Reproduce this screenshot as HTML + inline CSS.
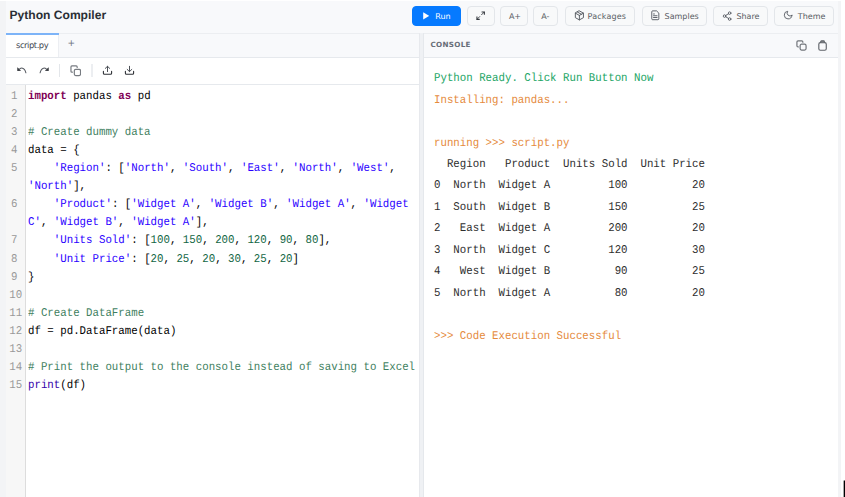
<!DOCTYPE html>
<html>
<head>
<meta charset="utf-8">
<title>Python Compiler</title>
<style>
html,body{margin:0;padding:0;background:#fff;}
body{text-rendering:geometricPrecision;width:845px;height:497px;overflow:hidden;position:relative;font-family:"DejaVu Sans","Liberation Sans",sans-serif;}
#frame{position:absolute;left:0;top:1px;width:841px;height:496px;background:#f3f4f6;}
#app{position:absolute;left:6px;top:0;width:832px;height:496px;background:#fff;}
#hdr{position:absolute;left:0;top:0;width:832px;height:32px;background:#f8f9fb;box-sizing:border-box;}
#title{position:absolute;left:3.5px;top:6.4px;font:bold 12.08px/16px "Liberation Sans",sans-serif;color:#2a2f35;white-space:nowrap;}
.btn{position:absolute;top:5px;height:20px;box-sizing:border-box;border:1px solid #e3e6ea;border-radius:4px;background:#f8f9fa;color:#4a4f57;font-size:8.1px;line-height:18px;white-space:nowrap;}
.bt{position:absolute;top:7.4px;font-size:8px;line-height:18px;color:#585d64;white-space:nowrap;}
.hi{position:absolute;}
#runt{color:#fff;}
#run{background:#067aff;border-color:#067aff;}
#left{position:absolute;left:0;top:32px;width:413px;height:464px;background:#fff;}
#split{position:absolute;left:413px;top:32px;width:5px;height:464px;background:#eff1f4;border-left:1px solid #e7e9ed;border-right:1px solid #e5e8ec;box-sizing:border-box;}
#right{position:absolute;left:418px;top:32px;width:414px;height:464px;background:#fff;}
#tabs{position:absolute;left:0;top:0;width:413px;height:25px;background:#f8f9fb;border-bottom:1px solid #e6e9ed;box-sizing:border-box;box-shadow:inset 0 1px 0 #eceef1;}
#tab{position:absolute;left:0;top:0;width:53px;height:24px;background:#fff;box-sizing:border-box;border-right:1px solid #eceef2;}
#tab i{position:absolute;left:0;top:0;width:53px;height:2px;background:#7db4f8;}
#tab span{position:absolute;left:10px;top:5px;font-size:8.4px;line-height:14px;color:#42474f;letter-spacing:-0.45px;white-space:nowrap;}
#plus{position:absolute;left:61.6px;top:4.4px;font-size:9px;line-height:14px;color:#6b7280;}
#tools{position:absolute;left:0;top:25px;width:413px;height:27px;background:#fff;border-bottom:1px solid #e6e9ed;box-sizing:border-box;}
#tools svg{position:absolute;}
.sep{position:absolute;top:6px;width:1px;height:13px;background:#e3e6ea;}
#ed{position:absolute;left:0;top:52px;width:413px;height:412px;background:#fff;font:10.75px/18.06px "Liberation Mono",monospace;color:#000;}
#gut{position:absolute;left:0;top:0;width:20px;height:412px;background:#f7f7f7;border-right:1px solid #ddd;box-sizing:border-box;}
.ln{transform:scaleY(1.1);transform-origin:0 11.9px;position:absolute;color:#999;height:18.06px;white-space:pre;}
.cl{transform:scaleY(1.1);transform-origin:0 11.9px;position:absolute;left:22px;white-space:pre;height:18.06px;}
.k{color:#7f0055;font-weight:bold;}
.c{color:#3f7f5f;}
.s{color:#2a00ff;}
.n{color:#116644;}
.b{color:#3300aa;}
#chdr{position:absolute;left:0;top:0;width:414px;height:25px;background:#f8f9fb;border-bottom:1px solid #e6e9ed;box-sizing:border-box;box-shadow:inset 0 1px 0 #eceef1;}
#chdr span{position:absolute;left:6.5px;top:4.5px;font:bold 7.2px/14px "DejaVu Sans",sans-serif;color:#676d77;letter-spacing:0.3px;}
#chdr svg{position:absolute;}
#con{position:absolute;left:0;top:25px;width:414px;height:439px;font:10.75px/21.45px "Liberation Mono",monospace;color:#2e2e2e;}
.o{transform:scaleY(1.1);transform-origin:0 13.6px;position:absolute;left:10px;white-space:pre;height:21.45px;}
.g{color:#22a565;}
.y{color:#e58a3c;}
#blk{position:absolute;left:844px;top:481px;width:1px;height:16px;background:#000;box-shadow:-1px 0 0 #a6a6a6;}
#blk2{position:absolute;left:843px;top:480px;width:2px;height:1px;background:linear-gradient(90deg,#d6d6d6 50%,#7c7c7c 50%);}
</style>
</head>
<body>
<div id="frame">
<div id="app">
  <div id="hdr">
    <div id="title">Python Compiler</div>
    <div class="btn" id="run" style="left:406.2px;width:48.6px;"></div>
    <svg class="hi" style="left:417.1px;top:10.8px" width="6.4" height="7.8" viewBox="0 0 7 8"><path d="M0.2 0.1 L6.8 4 L0.2 7.9 Z" fill="#fff"/></svg>
    <span class="bt" id="runt" style="left:429.3px;">Run</span>
    <div class="btn" style="left:460.5px;width:28.2px;"></div>
    <svg class="hi" style="left:470.1px;top:9.6px" width="9.3" height="9.3" viewBox="0 0 10 10" fill="none" stroke="#33373d" stroke-linejoin="miter"><path d="M6 1H9V4M1 6V9H4" stroke-width="1.15"/><path d="M9 1L5.7 4.3M1 9L4.3 5.7" stroke-width="0.95"/></svg>
    <div class="btn" style="left:494.3px;width:27.9px;"></div>
    <span class="bt" style="left:502.9px;">A+</span>
    <div class="btn" style="left:526.6px;width:25.7px;"></div>
    <span class="bt" style="left:535.2px;">A-</span>
    <div class="btn" style="left:559.4px;width:69.2px;"></div>
    <svg class="hi" style="left:567.6px;top:9.1px" width="10.8" height="10.8" viewBox="0 0 24 24" fill="none" stroke="#555a62" stroke-width="2.1" stroke-linecap="round" stroke-linejoin="round"><path d="M12 2L21 7V17L12 22L3 17V7Z"/><path d="M3 7L12 12L21 7M12 12V22M7.5 4.5L16.5 9.5"/></svg>
    <span class="bt" style="left:581.6px;letter-spacing:0.14px">Packages</span>
    <div class="btn" style="left:635.5px;width:65.2px;"></div>
    <svg class="hi" style="left:643.8px;top:9.4px" width="10.6" height="10.6" viewBox="0 0 24 24" fill="none" stroke="#555a62" stroke-width="2.1" stroke-linecap="round" stroke-linejoin="round"><path d="M14 2H6a2 2 0 0 0-2 2v16a2 2 0 0 0 2 2h12a2 2 0 0 0 2-2V8Z"/><path d="M8 13h8M8 17h8M8 9h2"/></svg>
    <span class="bt" style="left:658.6px;">Samples</span>
    <div class="btn" style="left:707.1px;width:55.4px;"></div>
    <svg class="hi" style="left:715.8px;top:9.5px" width="10.2" height="10.2" viewBox="0 0 24 24" fill="none" stroke="#555a62" stroke-width="2.1" stroke-linecap="round" stroke-linejoin="round"><circle cx="18" cy="5" r="3"/><circle cx="6" cy="12" r="3"/><circle cx="18" cy="19" r="3"/><path d="M8.6 13.5l6.8 4M15.4 6.5l-6.8 4"/></svg>
    <span class="bt" style="left:730.4px;">Share</span>
    <div class="btn" style="left:768.3px;width:60.0px;"></div>
    <svg class="hi" style="left:777.2px;top:9.4px" width="10.2" height="10.2" viewBox="0 0 24 24" fill="none" stroke="#555a62" stroke-width="2.1" stroke-linecap="round" stroke-linejoin="round"><path d="M21 12.8A9 9 0 1 1 11.2 3 7 7 0 0 0 21 12.8z"/></svg>
    <span class="bt" style="left:791.8px;">Theme</span>
  </div>

  <div id="left">
    <div id="tabs">
      <div id="tab"><i></i><span>script.py</span></div>
      <div id="plus">+</div>
    </div>
    <div id="tools">
      <svg style="left:10px;top:7px" width="12" height="10" viewBox="0 0 12 10"><path d="M1.3 2.3V6.1L5.1 5.7Z" fill="#2a2d32"/><path d="M2.8 5C4.6 2.3 8.4 1.9 9.9 7.8" fill="none" stroke="#575b62" stroke-width="1.05" stroke-linecap="round"/></svg>
      <svg style="left:32px;top:7px" width="12" height="10" viewBox="0 0 12 10"><path d="M10.7 2.3V6.1L6.9 5.7Z" fill="#2a2d32"/><path d="M9.2 5C7.4 2.3 3.6 1.9 2.1 7.8" fill="none" stroke="#575b62" stroke-width="1.05" stroke-linecap="round"/></svg>
      <div class="sep" style="left:53px"></div>
      <svg style="left:63.5px;top:7px" width="11.5" height="11.5" viewBox="0 0 24 24" fill="none" stroke="#777b81" stroke-width="2.5" stroke-linecap="round" stroke-linejoin="round"><rect x="9" y="9" width="13" height="13" rx="3"/><path d="M5 15H4a2 2 0 0 1-2-2V4a2 2 0 0 1 2-2h9a2 2 0 0 1 2 2v1"/></svg>
      <div class="sep" style="left:85px;width:2px;background:#eceef1"></div>
      <svg style="left:96px;top:7px" width="11" height="11" viewBox="0 0 11 11" fill="none" stroke-linecap="round" stroke-linejoin="round"><path d="M1.4 6.4V8.2Q1.4 9.2 2.4 9.2H8.6Q9.6 9.2 9.6 8.2V6.4" stroke="#2e3137" stroke-width="1.1"/><path d="M5.5 6.6V1.4M3.3 3.4L5.5 1.3L7.7 3.4" stroke="#4d5158" stroke-width="1"/></svg>
      <svg style="left:118px;top:7px" width="11" height="11" viewBox="0 0 11 11" fill="none" stroke-linecap="round" stroke-linejoin="round"><path d="M1.4 6.4V8.2Q1.4 9.2 2.4 9.2H8.6Q9.6 9.2 9.6 8.2V6.4" stroke="#2e3137" stroke-width="1.1"/><path d="M5.5 1.3V6.5M3.2 4.4L5.5 6.6L7.8 4.4" stroke="#4d5158" stroke-width="1"/></svg>
    </div>
    <div id="ed">
      <div id="gut"></div>
      <div class="ln" style="top:3.00px;left:5.0px">1</div>
      <div class="cl" style="top:3.00px"><span class="k">import</span> pandas <span class="k">as</span> pd</div>
      <div class="ln" style="top:21.06px;left:5.0px">2</div>
      <div class="ln" style="top:39.12px;left:5.0px">3</div>
      <div class="cl" style="top:39.12px"><span class="c"># Create dummy data</span></div>
      <div class="ln" style="top:57.18px;left:5.0px">4</div>
      <div class="cl" style="top:57.18px">data = {</div>
      <div class="ln" style="top:75.24px;left:5.0px">5</div>
      <div class="cl" style="top:75.24px">    <span class="s">'Region'</span>: [<span class="s">'North'</span>, <span class="s">'South'</span>, <span class="s">'East'</span>, <span class="s">'North'</span>, <span class="s">'West'</span>, </div>
      <div class="cl" style="top:93.30px"><span class="s">'North'</span>],</div>
      <div class="ln" style="top:111.36px;left:5.0px">6</div>
      <div class="cl" style="top:111.36px">    <span class="s">'Product'</span>: [<span class="s">'Widget A'</span>, <span class="s">'Widget B'</span>, <span class="s">'Widget A'</span>, <span class="s">'Widget </span></div>
      <div class="cl" style="top:129.42px"><span class="s">C'</span>, <span class="s">'Widget B'</span>, <span class="s">'Widget A'</span>],</div>
      <div class="ln" style="top:147.48px;left:5.0px">7</div>
      <div class="cl" style="top:147.48px">    <span class="s">'Units Sold'</span>: [<span class="n">100</span>, <span class="n">150</span>, <span class="n">200</span>, <span class="n">120</span>, <span class="n">90</span>, <span class="n">80</span>],</div>
      <div class="ln" style="top:165.54px;left:5.0px">8</div>
      <div class="cl" style="top:165.54px">    <span class="s">'Unit Price'</span>: [<span class="n">20</span>, <span class="n">25</span>, <span class="n">20</span>, <span class="n">30</span>, <span class="n">25</span>, <span class="n">20</span>]</div>
      <div class="ln" style="top:183.60px;left:5.0px">9</div>
      <div class="cl" style="top:183.60px">}</div>
      <div class="ln" style="top:201.66px;left:3.2px">10</div>
      <div class="ln" style="top:219.72px;left:3.2px">11</div>
      <div class="cl" style="top:219.72px"><span class="c"># Create DataFrame</span></div>
      <div class="ln" style="top:237.78px;left:3.2px">12</div>
      <div class="cl" style="top:237.78px">df = pd.DataFrame(data)</div>
      <div class="ln" style="top:255.84px;left:3.2px">13</div>
      <div class="ln" style="top:273.90px;left:3.2px">14</div>
      <div class="cl" style="top:273.90px"><span class="c"># Print the output to the console instead of saving to Excel</span></div>
      <div class="ln" style="top:291.96px;left:3.2px">15</div>
      <div class="cl" style="top:291.96px"><span class="b">print</span>(df)</div>
    </div>
  </div>

  <div id="split"></div>

  <div id="right">
    <div id="chdr">
      <span>CONSOLE</span>
      <svg style="left:372px;top:7px" width="11" height="11" viewBox="0 0 24 24" fill="none" stroke="#70747a" stroke-width="2.6" stroke-linecap="round" stroke-linejoin="round"><rect x="9" y="9" width="13" height="13" rx="3.4"/><path d="M5 15H4.5a2.5 2.5 0 0 1-2.5-2.5V4.5a2.5 2.5 0 0 1 2.5-2.500h8a2.500 2.500 0 0 1 2.500 2.500v.5"/></svg>
      <svg style="left:393.9px;top:6.7px" width="9.1" height="11.2" viewBox="0 0 10 12" fill="none" stroke="#5f6369" stroke-width="1.25" stroke-linejoin="round"><rect x="0.9" y="2.7" width="8.2" height="8.4" rx="1.7"/><path d="M3 2.7V1.7Q3 0.8 3.9 0.8H6.100Q7 0.8 7 1.700V2.700" fill="#8a8d92"/></svg>
    </div>
    <div id="con">
      <div class="o g" style="top:11.20px">Python Ready. Click Run Button Now</div>
      <div class="o y" style="top:32.65px">Installing: pandas...</div>
      <div class="o y" style="top:75.55px">running &gt;&gt;&gt; script.py</div>
      <div class="o " style="top:97.00px">  Region   Product  Units Sold  Unit Price</div>
      <div class="o " style="top:118.45px">0  North  Widget A         100          20</div>
      <div class="o " style="top:139.90px">1  South  Widget B         150          25</div>
      <div class="o " style="top:161.35px">2   East  Widget A         200          20</div>
      <div class="o " style="top:182.80px">3  North  Widget C         120          30</div>
      <div class="o " style="top:204.25px">4   West  Widget B          90          25</div>
      <div class="o " style="top:225.70px">5  North  Widget A          80          20</div>
      <div class="o y" style="top:268.60px">&gt;&gt;&gt; Code Execution Successful</div>
    </div>
  </div>
</div>
</div>
<div id="blk"></div><div id="blk2"></div>
</body>
</html>
